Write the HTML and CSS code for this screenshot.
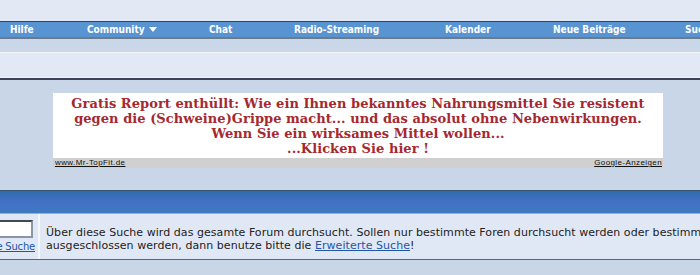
FILE: index.html
```html
<!DOCTYPE html>
<html lang="de">
  <head>
    <meta charset="UTF-8" />
    <meta name="viewport" content="width=device-width, initial-scale=1.0" />
    <title>Suche</title>
    <link rel="stylesheet" href="styles.css">
  </head>
  <body>
    <div class="top"></div>
    <div class="navbar">
      <a href="#">Hilfe</a>
      <a href="#">Community <span class="arrow"></span></a>
      <a href="#">Chat</a>
      <a href="#">Radio-Streaming</a>
      <a href="#">Kalender</a>
      <a href="#">Neue Beiträge</a>
      <a href="#">Suche</a>
    </div>
    <div class="subnav"></div>
    <div class="spacer"></div>
    <div class="page">
      <div class="ad">
        <div class="ad-text">
          Gratis Report enthüllt: Wie ein Ihnen bekanntes Nahrungsmittel Sie resistent<br />
          gegen die (Schweine)Grippe macht... und das absolut ohne Nebenwirkungen.<br />
          Wenn Sie ein wirksames Mittel wollen...<br />
          ...Klicken Sie hier !
        </div>
        <div class="ad-footer">
          <a href="#">www.Mr-TopFit.de</a>
          <a href="#">Google-Anzeigen</a>
        </div>
      </div>
      <div class="table-head"></div>
      <div class="search-row">
        <div class="search-cell">
          <input type="text" />
          <a href="#">Erweiterte Suche</a>
        </div>
        <div class="info-cell">
          Über diese Suche wird das gesamte Forum durchsucht. Sollen nur bestimmte Foren durchsucht werden oder bestimmte Foren<br />
          ausgeschlossen werden, dann benutze bitte die <a href="#">Erweiterte Suche</a>!
        </div>
      </div>
    </div>
  </body>
</html>
```

FILE: styles.css
```css
body {
  margin: 0;
  width: 700px;
  overflow: hidden;
  background-color: #c9d6e8;
  font-family: "DejaVu Sans", Verdana, sans-serif;
}
.top {
  height: 21px;
  background-color: #e2e9f5;
}
.navbar {
  display: grid;
  grid-template-columns: 77px 122px 85px 151px 108px 132px 100px;
  padding-left: 10px;
  height: 15px;
  align-items: center;
  background-color: #5893d2;
  border-top: 1px solid #34465c;
  border-bottom: 2px solid #6c7a8a;
  white-space: nowrap;
}
.navbar a {
  color: white;
  text-decoration: none;
  font-family: "DejaVu Sans Condensed", "DejaVu Sans", sans-serif;
  font-weight: bold;
  font-size: 10px;
}
.arrow {
  display: inline-block;
  width: 0;
  height: 0;
  margin-left: 1px;
  border-left: 4px solid transparent;
  border-right: 4px solid transparent;
  border-top: 5px solid white;
  vertical-align: 1px;
}
.subnav {
  height: 13px;
  background-color: #cad7e9;
  border-bottom: 1px solid #f2f5fb;
}
.spacer {
  height: 24px;
  background-color: #e2e9f5;
  border-bottom: 1px solid #f0f4fa;
}
.page {
  border-top: 2px solid #3a4658;
  padding-top: 13px;
}
.ad {
  width: 610px;
  margin-left: 53px;
  background-color: white;
}
.ad-text {
  height: 60px;
  padding-top: 3px;
  padding-bottom: 2px;
  text-align: center;
  color: #a5282e;
  font-family: "DejaVu Serif", Georgia, serif;
  font-weight: bold;
  font-size: 13px;
  line-height: 15px;
  letter-spacing: 0.05px;
  white-space: nowrap;
}
.ad-footer {
  display: flex;
  justify-content: space-between;
  height: 10px;
  padding: 0 1px 0 2px;
  background-color: #d0d0d0;
}
.ad-footer a {
  color: #111;
  font-family: "Liberation Sans", Arial, sans-serif;
  font-size: 8px;
  line-height: 10px;
  letter-spacing: 0.4px;
}
.table-head {
  margin-top: 22px;
  height: 22px;
  background: linear-gradient(#2e6cab, #4470c6 50%, #3c7cc0);
  border-top: 1px solid #3a5470;
  border-bottom: 1px solid #8fb2dc;
}
.search-row {
  display: flex;
  height: 45px;
  background-color: #e1e8f5;
  border-bottom: 1px solid #56667a;
}
.search-cell {
  flex: 0 0 36px;
  display: flex;
  flex-direction: column;
  align-items: flex-end;
  padding: 6px 2px 0 0;
  overflow: hidden;
  border-right: 2px solid #f4f7fc;
}
.search-cell input {
  width: 140px;
  height: 18px;
  box-sizing: border-box;
  margin: 0 3px 0 0;
  border: 2px solid #8a96a6;
  border-top-color: #404850;
  border-left-color: #404850;
  background-color: white;
  flex-shrink: 0;
}
.search-cell a {
  margin-top: 3px;
  margin-right: 1px;
  color: #2256a8;
  font-size: 10px;
  letter-spacing: -0.2px;
  white-space: nowrap;
}
.info-cell {
  flex: 1;
  min-width: 0;
  overflow: hidden;
  padding: 12px 0 0 6px;
  color: #222;
  font-size: 11px;
  line-height: 13px;
  letter-spacing: 0.05px;
  white-space: nowrap;
}
.info-cell a {
  color: #2256a8;
}
```
